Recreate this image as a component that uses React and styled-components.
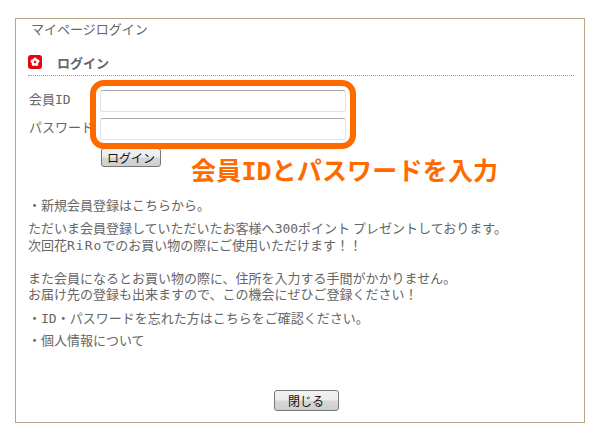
import React from "react";
import styled, { createGlobalStyle } from "styled-components";

const GlobalStyle = createGlobalStyle`
  html, body {
    margin: 0;
    padding: 0;
    background: #fff;
  }
  body {
    font-family: "Noto Sans CJK JP", "Liberation Sans", sans-serif;
    font-size: 13px;
    color: #666;
  }
`;

const Page = styled.div`
  width: 600px;
  height: 441px;
  padding: 18px 15px 0;
  box-sizing: border-box;
`;

const Panel = styled.div`
  position: relative;
  box-sizing: border-box;
  width: 570px;
  height: 405px;
  border: 1px solid #b8a68a;
  padding: 0 10px 0 12px;
  display: flex;
  flex-direction: column;
`;

const PanelTitle = styled.div`
  height: 20px;
  line-height: 20px;
  padding-left: 3px;
  color: #666;
`;

const SectionHead = styled.h2`
  display: flex;
  align-items: center;
  gap: 15px;
  margin: 12px 0 0;
  height: 22px;
  padding-bottom: 2px;
  font-size: 13px;
  font-weight: 700;
  color: #666;
  border-bottom: 1px dotted #c98a50;
`;

const FormGrid = styled.div`
  display: grid;
  grid-template-columns: 71px 246px;
  grid-auto-rows: 22px;
  row-gap: 6px;
  margin: 14px 0 0 1px;
  align-items: center;
`;

const FieldLabel = styled.label`
  white-space: nowrap;
  color: #666;
  padding-bottom: 6px;
`;

const Latin = styled.span`
  font-family: "DejaVu Sans Mono", "Noto Sans CJK JP", monospace;
  letter-spacing: ${(p) => p.$spacing ?? 0}px;
`;

const TextInput = styled.input`
  box-sizing: border-box;
  width: 246px;
  height: 22px;
  border: 1px solid #dfe3e8;
  border-top-color: #a9a9ae;
  border-radius: 3px;
  background: #fff;
`;

const GrayButton = styled.button`
  box-sizing: border-box;
  display: block;
  width: ${(p) => p.$width}px;
  height: ${(p) => p.$height}px;
  padding: 0;
  border: 1px solid #777;
  border-radius: 3px;
  background: linear-gradient(#f2f2f2 0, #ececec 48%, #d6d6d6 52%, #cfcfcf 100%);
  font-family: "Noto Sans CJK JP", sans-serif;
  font-size: 12px;
  line-height: 1;
  color: #111;
`;

const LoginButton = styled(GrayButton)`
  margin: 8px 0 0 73px;
`;

const Notes = styled.div`
  margin-top: 30px;
  flex: 1;
  font-size: 13px;
  line-height: 16.5px;
  color: #666;
`;

const Note = styled.p`
  margin: 0 0 ${(p) => p.$gap ?? 5}px;
  white-space: nowrap;
`;

const CloseButton = styled(GrayButton)`
  align-self: center;
  margin: 0 0 11px 10px;
`;

const Highlight = styled.div`
  position: absolute;
  left: 74px;
  top: 61px;
  width: 266px;
  height: 69px;
  box-sizing: border-box;
  border: 6px solid #ff6a00;
  border-radius: 14px;
  pointer-events: none;
`;

const Callout = styled.div`
  position: absolute;
  left: 175px;
  top: 132px;
  font-size: 25px;
  line-height: 36px;
  font-weight: 700;
  letter-spacing: 0.2px;
  color: #ff6a00;
  white-space: nowrap;
`;

const FlowerIcon = () => (
  <svg width="14" height="14" viewBox="0 0 14 14" aria-hidden="true">
    <rect width="14" height="14" rx="3" fill="#f0000f" />
    <g fill="#fff">
      <circle cx="7" cy="4.4" r="1.9" />
      <circle cx="9.5" cy="6.2" r="1.9" />
      <circle cx="8.5" cy="9.1" r="1.9" />
      <circle cx="5.5" cy="9.1" r="1.9" />
      <circle cx="4.5" cy="6.2" r="1.9" />
    </g>
    <circle cx="7" cy="7" r="1.2" fill="#f0000f" />
  </svg>
);

export default function App() {
  return (
    <Page>
      <GlobalStyle />
      <Panel>
        <PanelTitle>マイページログイン</PanelTitle>
        <SectionHead>
          <FlowerIcon />
          ログイン
        </SectionHead>
        <FormGrid>
          <FieldLabel>会員<Latin>ID</Latin></FieldLabel>
          <TextInput type="text" />
          <FieldLabel>パスワード</FieldLabel>
          <TextInput type="password" />
        </FormGrid>
        <LoginButton $width={60} $height={19}>ログイン</LoginButton>
        <Notes>
          <Note $gap={6}>・新規会員登録はこちらから。</Note>
          <Note $gap={0}>ただいま会員登録していただいたお客様へ<Latin>300</Latin>ポイント プレゼントしております。</Note>
          <Note $gap={15}>次回花<Latin $spacing={1}>RiRo</Latin>でのお買い物の際にご使用いただけます！！</Note>
          <Note $gap={0}>また会員になるとお買い物の際に、住所を入力する手間がかかりません。</Note>
          <Note $gap={7}>お届け先の登録も出来ますので、この機会にぜひご登録ください！</Note>
          <Note $gap={5}>・<Latin>ID</Latin>・パスワードを忘れた方はこちらをご確認ください。</Note>
          <Note>・個人情報について</Note>
        </Notes>
        <CloseButton $width={65} $height={21}>閉じる</CloseButton>
        <Highlight />
        <Callout>会員<Latin>ID</Latin>とパスワードを入力</Callout>
      </Panel>
    </Page>
  );
}
